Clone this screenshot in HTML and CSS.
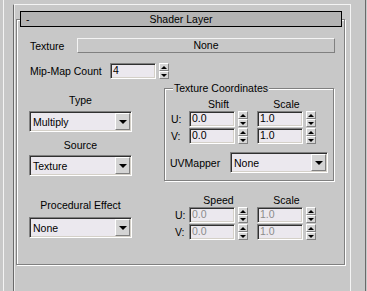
FILE: index.html
```html
<!DOCTYPE html>
<html>
<head>
<meta charset="utf-8">
<link rel="stylesheet" href="styles.css">
</head>
<body>
<div class="app">
  <div class="edge-left"></div>
  <div class="panel">
    <div class="rollout">
      <div class="rhead"><span class="minus">-</span><span class="rtitle">Shader Layer</span><span class="rspacer"></span></div>
      <div class="rbody">
        <div class="row tex-row">
          <span class="lbl tex-lbl">Texture</span>
          <div class="btn-wide">None</div>
        </div>
        <div class="row mip-row">
          <span class="lbl mip-lbl">Mip-Map Count</span>
          <div class="spin">
            <div class="field">4</div>
            <div class="spinbtn"><span class="sb-up"></span><span class="sb-down"></span></div>
          </div>
        </div>
        <div class="mid">
          <div class="lcol">
            <div class="clbl type-lbl">Type</div>
            <div class="dd dd-type"><span class="dd-text">Multiply</span><span class="dd-btn"><span class="tri"></span></span></div>
            <div class="clbl source-lbl">Source</div>
            <div class="dd dd-source"><span class="dd-text">Texture</span><span class="dd-btn"><span class="tri"></span></span></div>
          </div>
          <fieldset class="tc">
            <legend>Texture Coordinates</legend>
            <div class="hdr"><span class="hcell">Shift</span><span class="hcell">Scale</span></div>
            <div class="srow">
              <span class="axis">U:</span>
              <div class="spin"><div class="field">0.0</div><div class="spinbtn"><span class="sb-up"></span><span class="sb-down"></span></div></div>
              <div class="spin spin2"><div class="field">1.0</div><div class="spinbtn"><span class="sb-up"></span><span class="sb-down"></span></div></div>
            </div>
            <div class="srow">
              <span class="axis">V:</span>
              <div class="spin"><div class="field">0.0</div><div class="spinbtn"><span class="sb-up"></span><span class="sb-down"></span></div></div>
              <div class="spin spin2"><div class="field">1.0</div><div class="spinbtn"><span class="sb-up"></span><span class="sb-down"></span></div></div>
            </div>
            <div class="uvrow">
              <span class="uv-lbl">UVMapper</span>
              <div class="dd dd-uv"><span class="dd-text">None</span><span class="dd-btn"><span class="tri"></span></span></div>
            </div>
          </fieldset>
        </div>
        <div class="bottom">
          <div class="lcol">
            <div class="clbl proc-lbl">Procedural Effect</div>
            <div class="dd dd-proc"><span class="dd-text">None</span><span class="dd-btn"><span class="tri"></span></span></div>
          </div>
          <div class="speed">
            <div class="hdr"><span class="hcell">Speed</span><span class="hcell">Scale</span></div>
            <div class="srow">
              <span class="axis">U:</span>
              <div class="spin dis"><div class="field">0.0</div><div class="spinbtn"><span class="sb-up"></span><span class="sb-down"></span></div></div>
              <div class="spin spin2 dis"><div class="field">1.0</div><div class="spinbtn"><span class="sb-up"></span><span class="sb-down"></span></div></div>
            </div>
            <div class="srow">
              <span class="axis">V:</span>
              <div class="spin dis"><div class="field">0.0</div><div class="spinbtn"><span class="sb-up"></span><span class="sb-down"></span></div></div>
              <div class="spin spin2 dis"><div class="field">1.0</div><div class="spinbtn"><span class="sb-up"></span><span class="sb-down"></span></div></div>
            </div>
          </div>
        </div>
      </div>
    </div>
  </div>
  <div class="edge-right"></div>
</div>
</body>
</html>
```
FILE: styles.css
```css
* { box-sizing: border-box; }
html, body { margin: 0; padding: 0; }
body {
  background: #c8c8c8;
  font-family: "Liberation Sans", Arial, sans-serif;
  font-size: 10.5px;
  color: #000;
  width: 367px;
  height: 291px;
  overflow: hidden;
}
.app { display: flex; height: 291px; }
.edge-left {
  flex: none;
  width: 10px;
  margin-left: 3px;
  border-left: 1px solid #f4f4f4;
}
.panel {
  flex: none;
  width: 338px;
  height: 300px;
  margin-top: 4px;
  border-left: 1px solid #6a6a6a;
  border-top: 1px solid #f4f4f4;
  border-right: 1px solid #f4f4f4;
  box-shadow: inset 1px 0 #ececec;
  padding: 14px 5px 0 2px;
}
.edge-right {
  flex: none;
  width: 15px;
  border-right: 1px solid #6a6a6a;
}
.rollout {
  height: 246px;
  border: 1px solid #808080;
  box-shadow: inset 1px 1px #fff, 1px 1px #fff;
}
.rhead {
  display: flex;
  align-items: center;
  height: 16px;
  margin: -9px 2px 0 3px;
  border: 1px solid #000;
  background: #b4b4b4;
  line-height: 12px;
}
.minus { width: 30px; padding-left: 5px; }
.rspacer { width: 30px; }
.rtitle { flex: 1; text-align: center; }
.rbody { padding: 0 9px 0 12px; }
.row { display: flex; align-items: center; }
.lbl { padding-left: 1px; line-height: 12px; }
.tex-row { margin-top: 11px; height: 15px; }
.tex-lbl { width: 48px; flex: none; }
.btn-wide {
  flex: 1;
  height: 15px;
  border: 1px solid;
  border-color: #f4f4f4 #808080 #808080 #f4f4f4;
  text-align: center;
  line-height: 12px;
}
.mip-row { margin-top: 10px; height: 16px; }
.mip-lbl { width: 81px; flex: none; }
.spin { display: flex; flex: none; }
.field {
  width: 46px;
  height: 16px;
  border: 1px solid;
  border-color: #808080 #fff #fff #808080;
  box-shadow: inset 1px 1px #303030, inset -1px -1px #d4d0c8;
  background: #ebe8ee;
  padding-left: 2px;
  line-height: 13px;
}
.spinbtn {
  width: 10px;
  height: 16px;
  margin-left: 3px;
  display: flex;
  flex-direction: column;
}
.sb-up, .sb-down {
  position: relative;
  height: 8px;
  background: #d6d6d6;
  border: 1px solid;
  border-color: #fff #808080 #808080 #fff;
  display: flex;
  align-items: center;
  justify-content: center;
}
.sb-up::after, .sb-down::after {
  content: "";
  width: 0;
  height: 0;
  border-left: 3px solid transparent;
  border-right: 3px solid transparent;
}
.sb-up::after { border-bottom: 3px solid #000; }
.sb-down::after { border-top: 3px solid #000; }
.mid { display: flex; align-items: flex-start; margin-top: 3px; }
.lcol { width: 103px; flex: none; }
.clbl { height: 12px; line-height: 12px; text-align: center; }
.type-lbl { margin-top: 12px; }
.dd-type { margin-top: 5px; }
.source-lbl { margin-top: 7px; }
.dd-source { margin-top: 4px; }
.dd {
  display: flex;
  height: 21px;
  border: 1px solid;
  border-color: #808080 #fff #fff #808080;
  box-shadow: inset 1px 1px #303030, inset -1px -1px #d4d0c8;
  background: #ebe8ee;
  padding: 1px;
}
.dd-text { flex: 1; padding-left: 2px; line-height: 18px; }
.dd-btn {
  width: 15px;
  flex: none;
  background: #d4d4d4;
  border: 1px solid;
  border-color: #fff #808080 #808080 #fff;
  display: flex;
  align-items: center;
  justify-content: center;
}
.tri {
  width: 0;
  height: 0;
  border-left: 4px solid transparent;
  border-right: 4px solid transparent;
  border-top: 4px solid #000;
}
.tc {
  flex: none;
  width: 170px;
  margin: 0 0 0 32px;
  padding: 4px 5px 7px 5px;
  border: 1px solid #808080;
  box-shadow: inset 1px 1px #fff, 1px 1px #fff;
  min-width: 0;
}
.tc legend {
  padding: 0 1px;
  margin-left: 3px;
  line-height: 12px;
  background: #c8c8c8;
}
.hdr { display: flex; height: 12px; line-height: 12px; padding-left: 19px; }
.hcell { width: 59px; text-align: center; }
.hcell + .hcell { margin-left: 9px; }
.srow { display: flex; align-items: center; margin-top: 1px; height: 16px; }
.axis { width: 19px; flex: none; padding-left: 1px; line-height: 12px; }
.spin2 { margin-left: 9px; }
.uvrow { display: flex; align-items: center; margin-top: 8px; }
.uv-lbl { width: 60px; flex: none; line-height: 12px; }
.dd-uv { flex: 1; }
.bottom { display: flex; align-items: flex-start; margin-top: 13px; }
.proc-lbl { margin-top: 5px; }
.dd-proc { margin-top: 6px; }
.speed { margin-left: 43px; }
.speed .hdr { padding-left: 14px; }
.speed .axis { width: 14px; padding-left: 0; }
.dis .field { color: #8c8c8c; }
```
